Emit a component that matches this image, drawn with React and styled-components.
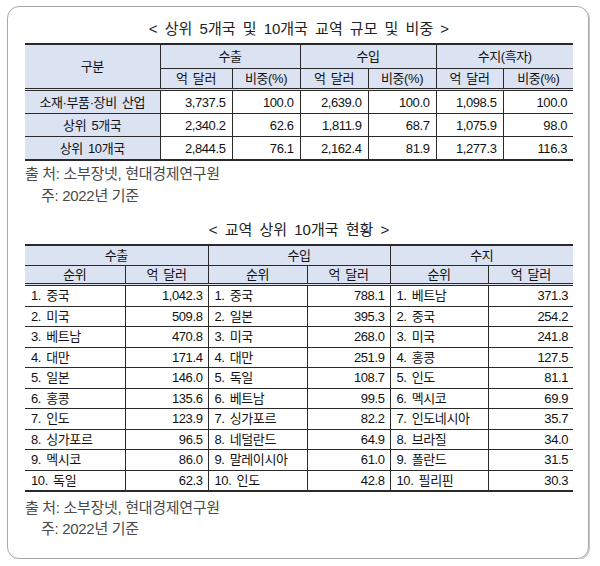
import React from 'react';
import styled, { createGlobalStyle } from 'styled-components';

const GlobalStyle = createGlobalStyle`
  body {
    margin: 0;
    background: #ffffff;
    font-family: "Liberation Sans", "Noto Sans CJK KR", sans-serif;
    color: #1a1a1a;
  }
`;

const Page = styled.div`
  width: 600px;
  padding: 6px 11px 0 7px;
  box-sizing: border-box;
`;

const Frame = styled.div`
  border: 1px solid #a8a8a8;
  border-radius: 12px;
  box-shadow: 1px 1px 0 #c8c8c8;
  padding: 13px 15px 19px 17px;
`;

const Title = styled.div`
  text-align: center;
  font-size: 15px;
  line-height: 18px;
  word-spacing: 3px;
  color: #222;
  margin: ${(p) => p.$top || 0}px 0 5px;
`;

const Table = styled.table`
  width: 548px;
  border-collapse: collapse;
  table-layout: fixed;
  border-top: 2px solid #2a2a2a;
  border-bottom: 2px solid #2a2a2a;
  font-size: 13px;
  line-height: 15px;
  letter-spacing: -0.4px;
  word-spacing: 2px;
  color: #111;
`;

const HeadCell = styled.th`
  background: #dbe3f2;
  font-weight: 400;
  height: ${(p) => p.$h}px;
  padding: 0;
  text-align: center;
  border-left: 1px solid #2a2a2a;
  border-bottom: ${(p) => (p.$last ? '3px double #2a2a2a' : '1px solid #2a2a2a')};
  &:first-child {
    border-left: none;
  }
`;

const Cell = styled.td`
  height: ${(p) => p.$h}px;
  padding: 0 ${(p) => (p.$align === 'right' ? 5 : 6)}px;
  text-align: ${(p) => p.$align || 'right'};
  background: ${(p) => (p.$shade ? '#dbe3f2' : 'transparent')};
  border-left: 1px solid #2a2a2a;
  border-top: 1px solid #2a2a2a;
  white-space: nowrap;
  &:first-child {
    border-left: none;
  }
`;

const Row = styled.tr`
  &:first-child td {
    border-top: none;
  }
`;

const Notes = styled.div`
  margin-top: ${(p) => p.$top}px;
  font-size: 15px;
  line-height: ${(p) => p.$lh}px;
  color: #4a4a4a;
  letter-spacing: -0.3px;
`;

const NoteLine = styled.div`
  padding-left: ${(p) => (p.$indent ? 16 : 0)}px;
`;

const summary = [
  ['소재·부품·장비 산업', '3,737.5', '100.0', '2,639.0', '100.0', '1,098.5', '100.0'],
  ['상위 5개국', '2,340.2', '62.6', '1,811.9', '68.7', '1,075.9', '98.0'],
  ['상위 10개국', '2,844.5', '76.1', '2,162.4', '81.9', '1,277.3', '116.3'],
];

const ranking = [
  ['1. 중국', '1,042.3', '1. 중국', '788.1', '1. 베트남', '371.3'],
  ['2. 미국', '509.8', '2. 일본', '395.3', '2. 중국', '254.2'],
  ['3. 베트남', '470.8', '3. 미국', '268.0', '3. 미국', '241.8'],
  ['4. 대만', '171.4', '4. 대만', '251.9', '4. 홍콩', '127.5'],
  ['5. 일본', '146.0', '5. 독일', '108.7', '5. 인도', '81.1'],
  ['6. 홍콩', '135.6', '6. 베트남', '99.5', '6. 멕시코', '69.9'],
  ['7. 인도', '123.9', '7. 싱가포르', '82.2', '7. 인도네시아', '35.7'],
  ['8. 싱가포르', '96.5', '8. 네덜란드', '64.9', '8. 브라질', '34.0'],
  ['9. 멕시코', '86.0', '9. 말레이시아', '61.0', '9. 폴란드', '31.5'],
  ['10. 독일', '62.3', '10. 인도', '42.8', '10. 필리핀', '30.3'],
];

const Source = ({ top, lh }) => (
  <Notes $top={top} $lh={lh}>
    <NoteLine>출 처: 소부장넷, 현대경제연구원</NoteLine>
    <NoteLine $indent>주: 2022년 기준</NoteLine>
  </Notes>
);

const SummaryTable = () => (
  <Table>
    <colgroup>
      {[135, 72, 68, 68, 68, 67, 70].map((w, i) => (
        <col key={i} style={{ width: w }} />
      ))}
    </colgroup>
    <thead>
      <tr>
        <HeadCell rowSpan={2} $h={23} $last>구분</HeadCell>
        <HeadCell colSpan={2} $h={23}>수출</HeadCell>
        <HeadCell colSpan={2} $h={23}>수입</HeadCell>
        <HeadCell colSpan={2} $h={23}>수지(흑자)</HeadCell>
      </tr>
      <tr>
        {['억 달러', '비중(%)', '억 달러', '비중(%)', '억 달러', '비중(%)'].map((t, i) => (
          <HeadCell key={i} $h={19} $last style={{ borderLeft: '1px solid #2a2a2a' }}>
            {t}
          </HeadCell>
        ))}
      </tr>
    </thead>
    <tbody>
      {summary.map((r) => (
        <Row key={r[0]}>
          <Cell $h={22} $align="center" $shade>{r[0]}</Cell>
          {r.slice(1).map((v, i) => (
            <Cell key={i} $h={22}>{v}</Cell>
          ))}
        </Row>
      ))}
    </tbody>
  </Table>
);

const RankTable = () => (
  <Table>
    <colgroup>
      {[100, 83, 99, 83, 98, 85].map((w, i) => (
        <col key={i} style={{ width: w }} />
      ))}
    </colgroup>
    <thead>
      <tr>
        <HeadCell colSpan={2} $h={19}>수출</HeadCell>
        <HeadCell colSpan={2} $h={19}>수입</HeadCell>
        <HeadCell colSpan={2} $h={19}>수지</HeadCell>
      </tr>
      <tr>
        {['순위', '억 달러', '순위', '억 달러', '순위', '억 달러'].map((t, i) => (
          <HeadCell key={i} $h={17} $last>{t}</HeadCell>
        ))}
      </tr>
    </thead>
    <tbody>
      {ranking.map((r) => (
        <Row key={r[0]}>
          {r.map((v, i) => (
            <Cell key={i} $h={19.5} $align={i % 2 === 0 ? 'left' : 'right'}>
              {v}
            </Cell>
          ))}
        </Row>
      ))}
    </tbody>
  </Table>
);

const App = () => (
  <Page>
    <GlobalStyle />
    <Frame>
      <Title>&lt; 상위 5개국 및 10개국 교역 규모 및 비중 &gt;</Title>
      <SummaryTable />
      <Source top={2} lh={22} />
      <Title $top={14}>&lt; 교역 상위 10개국 현황 &gt;</Title>
      <RankTable />
      <Source top={5} lh={21} />
    </Frame>
  </Page>
);

export default App;
